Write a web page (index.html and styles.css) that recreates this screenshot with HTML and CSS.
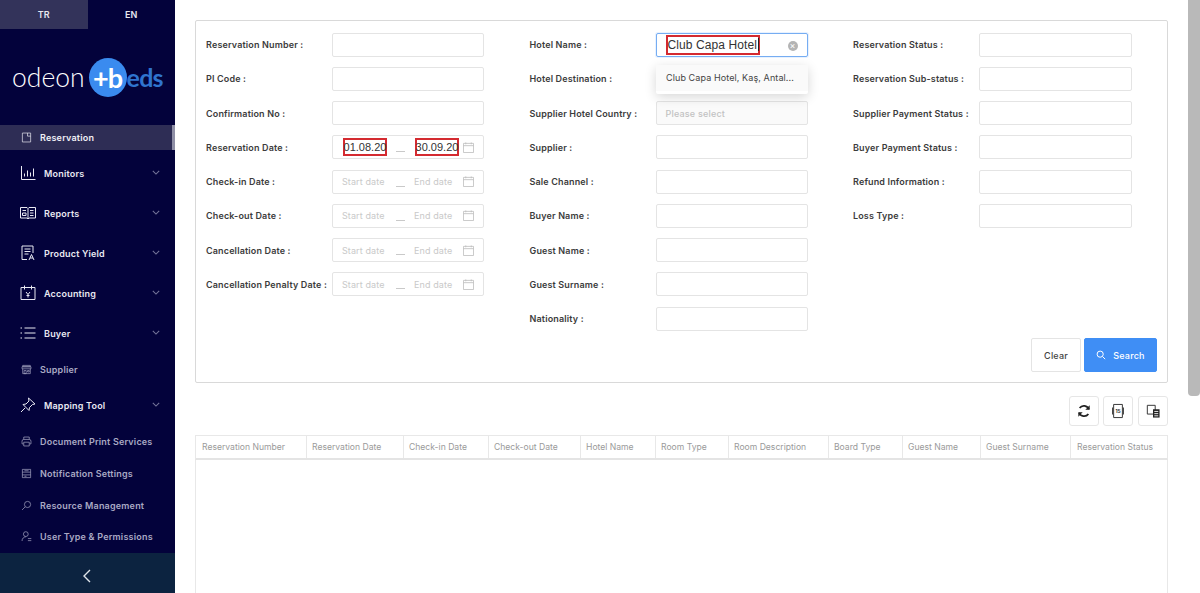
FILE: index.html
```html
<!DOCTYPE html>
<html lang="en">
<head>
<meta charset="utf-8">
<title>Reservation</title>
<link rel="stylesheet" href="styles.css">
</head>
<body>
<div class="app">
<aside class="sidebar">
  <div class="langs"><div class="lang lang-on">TR</div><div class="lang">EN</div></div>
  <div class="logo"><span class="logo-od">odeon</span><span class="logo-mark"><span class="logo-circle"></span><span class="logo-pb">+b</span></span><span class="logo-eds">eds</span></div>
  <nav class="menu">
    <a class="item small active"><svg class="ic" viewBox="0 0 16 16"><path d="M2 1.500h12v13h-12zM9.500 1.500v4.500h4.500"/></svg><span>Reservation</span></a>
    <a class="item big"><svg class="ic" viewBox="0 0 16 16"><path d="M1.500 1v13.500h14M4.500 11.500v-3M7.500 11.500v-6M10.500 11.500v-4M13.500 11.500v-8"/></svg><span>Monitors</span><svg class="chev" viewBox="0 0 10 6"><path d="M1 1l4 4 4-4"/></svg></a>
    <a class="item big"><svg class="ic" viewBox="0 0 16 16"><path d="M.5 2.500h6.500l1 1 1-1h6.500v10.500h-6.500l-1 1-1-1h-6.500zM8 3.500v10M2.500 5.500h3.500M2.500 8h3.500v2.500h-3.500zM10 5.500h3.500M10 8h3.500M10 10.500h3.500"/></svg><span>Reports</span><svg class="chev" viewBox="0 0 10 6"><path d="M1 1l4 4 4-4"/></svg></a>
    <a class="item big"><svg class="ic" viewBox="0 0 16 16"><path d="M7 14.500h-5v-13.500h11v7M4.500 4h6M4.500 6.500h6M4.500 9h4M9 15l2.500-5.500 2.500 5.500M10 13h3"/></svg><span>Product Yield</span><svg class="chev" viewBox="0 0 10 6"><path d="M1 1l4 4 4-4"/></svg></a>
    <a class="item big"><svg class="ic" viewBox="0 0 16 16"><path d="M1 2.500h14v12h-14zM4.500 .5v4M11.500 .5v4M6 7l2 2.500 2-2.500M8 9.500v3M6.500 10.500h3"/></svg><span>Accounting</span><svg class="chev" viewBox="0 0 10 6"><path d="M1 1l4 4 4-4"/></svg></a>
    <a class="item big"><svg class="ic" viewBox="0 0 16 16"><path d="M4.500 3h11M4.500 8h11M4.500 13h11M.5 3h1.500M.5 8h1.500M.5 13h1.500"/></svg><span>Buyer</span><svg class="chev" viewBox="0 0 10 6"><path d="M1 1l4 4 4-4"/></svg></a>
    <a class="item small dim"><svg class="ic" viewBox="0 0 16 16"><path d="M2.500 2h11v2h-11zM1.500 4h13v3h-13zM2.500 7v7h11v-7M4.500 9.500h3v4.500h-3zM9.500 9.500h2.500v2h-2.500z"/></svg><span>Supplier</span></a>
    <a class="item big"><svg class="ic" viewBox="0 0 16 16"><path d="M8.500 1l6.500 6-2.500.5-3 3-.5 3-6-6 3-.5 3-3zM5 11l-4 4"/></svg><span>Mapping Tool</span><svg class="chev" viewBox="0 0 10 6"><path d="M1 1l4 4 4-4"/></svg></a>
    <a class="item small dim"><svg class="ic" viewBox="0 0 16 16"><path d="M4 5v-3.500h8v3.500M3.500 11.500h-2v-4a2.500 2.500 0 0 1 2.500-2.500h8a2.500 2.500 0 0 1 2.500 2.500v4h-2M4 9h8v5.500h-8z"/></svg><span>Document Print Services</span></a>
    <a class="item small dim"><svg class="ic" viewBox="0 0 16 16"><path d="M2 2h12v12h-12zM2 6h12M5 4h6M2 10h12M5 12h3"/></svg><span>Notification Settings</span></a>
    <a class="item small dim"><svg class="ic" viewBox="0 0 16 16"><circle cx="9.500" cy="6.500" r="4.500"/><path d="M6 10l-4.500 4.500"/></svg><span>Resource Management</span></a>
    <a class="item small dim"><svg class="ic" viewBox="0 0 16 16"><circle cx="7" cy="4.500" r="3.500"/><path d="M1.500 14.500c0-3.500 2.500-6 5.500-6M10 11h5M10 14h5"/></svg><span>User Type &amp; Permissions</span></a>
  </nav>
  <div class="collapse"><svg class="back" viewBox="0 0 10 14"><path d="M8 1l-6 6 6 6"/></svg></div>
</aside>
<main class="main">
  <section class="card">
    <div class="cols">
      <div class="col">
        <div class="row"><label>Reservation Number :</label><div class="box"></div></div>
        <div class="row"><label>PI Code :</label><div class="box"></div></div>
        <div class="row"><label>Confirmation No :</label><div class="box"></div></div>
        <div class="row"><label>Reservation Date :</label><div class="box range"><span class="date">01.08.20</span><span class="to to-filled"></span><span class="date">30.09.20</span><svg class="cal" viewBox="0 0 12 12"><path d="M.5 1.500h11v10h-11zM.5 4h11M3 .5v2M9 .5v2"/></svg></div></div>
        <div class="row"><label>Check-in Date :</label><div class="box range empty"><span class="ph">Start date</span><span class="to"></span><span class="ph">End date</span><svg class="cal" viewBox="0 0 12 12"><path d="M.5 1.500h11v10h-11zM.5 4h11M3 .5v2M9 .5v2"/></svg></div></div>
        <div class="row"><label>Check-out Date :</label><div class="box range empty"><span class="ph">Start date</span><span class="to"></span><span class="ph">End date</span><svg class="cal" viewBox="0 0 12 12"><path d="M.5 1.500h11v10h-11zM.5 4h11M3 .5v2M9 .5v2"/></svg></div></div>
        <div class="row"><label>Cancellation Date :</label><div class="box range empty"><span class="ph">Start date</span><span class="to"></span><span class="ph">End date</span><svg class="cal" viewBox="0 0 12 12"><path d="M.5 1.500h11v10h-11zM.5 4h11M3 .5v2M9 .5v2"/></svg></div></div>
        <div class="row"><label>Cancellation Penalty Date :</label><div class="box range empty"><span class="ph">Start date</span><span class="to"></span><span class="ph">End date</span><svg class="cal" viewBox="0 0 12 12"><path d="M.5 1.500h11v10h-11zM.5 4h11M3 .5v2M9 .5v2"/></svg></div></div>
      </div>
      <div class="col">
        <div class="row"><label>Hotel Name :</label><div class="box focus"><span class="typed">Club Capa Hotel</span><span class="clear-x">×</span>
          <div class="drop"><div class="drop-item">Club Capa Hotel, Kaş, Antal...</div></div></div></div>
        <div class="row"><label>Hotel Destination :</label><div class="box"></div></div>
        <div class="row"><label>Supplier Hotel Country :</label><div class="box select"><span class="please">Please select</span></div></div>
        <div class="row"><label>Supplier :</label><div class="box"></div></div>
        <div class="row"><label>Sale Channel :</label><div class="box"></div></div>
        <div class="row"><label>Buyer Name :</label><div class="box"></div></div>
        <div class="row"><label>Guest Name :</label><div class="box"></div></div>
        <div class="row"><label>Guest Surname :</label><div class="box"></div></div>
        <div class="row"><label>Nationality :</label><div class="box"></div></div>
      </div>
      <div class="col col-last">
        <div class="row"><label>Reservation Status :</label><div class="box"></div></div>
        <div class="row"><label>Reservation Sub-status :</label><div class="box"></div></div>
        <div class="row"><label>Supplier Payment Status :</label><div class="box"></div></div>
        <div class="row"><label>Buyer Payment Status :</label><div class="box"></div></div>
        <div class="row"><label>Refund Information :</label><div class="box"></div></div>
        <div class="row"><label>Loss Type :</label><div class="box"></div></div>
      </div>
    </div>
    <div class="actions">
      <button class="btn">Clear</button>
      <button class="btn primary"><svg class="search" viewBox="0 0 12 12"><circle cx="5" cy="5" r="3.700"/><path d="M8 8l3 3"/></svg>Search</button>
    </div>
  </section>
  <div class="tools">
    <button class="tool"><svg viewBox="0 0 16 16"><path class="thick" d="M13.500 6a6 6 0 0 0-10.500-1.500M2.500 10a6 6 0 0 0 10.500 1.500"/><path class="fill" d="M14.500 1.500v5h-5zM1.500 14.500v-5h5z"/></svg></button>
    <button class="tool"><svg viewBox="0 0 16 16"><path class="thin" d="M3 .5h10v15h-10zM1.800 4v8M14.200 4v8"/><text class="xls" x="8" y="10.500">15</text></svg></button>
    <button class="tool"><svg viewBox="0 0 16 16"><path class="thin" d="M1.500 1.500h9v10h-9z"/><path class="fill" d="M8 6h7.500v9.500h-7.500z"/><path class="wline" d="M9.500 8.500h4.500M9.500 11h4.500M9.500 13.500h4.500"/></svg></button>
  </div>
  <section class="table">
    <div class="thead">
      <div class="th c1">Reservation Number</div>
      <div class="th c2">Reservation Date</div>
      <div class="th c3">Check-in Date</div>
      <div class="th c4">Check-out Date</div>
      <div class="th c5">Hotel Name</div>
      <div class="th c6">Room Type</div>
      <div class="th c7">Room Description</div>
      <div class="th c8">Board Type</div>
      <div class="th c9">Guest Name</div>
      <div class="th c10">Guest Surname</div>
      <div class="th c11">Reservation Status</div>
    </div>
    <div class="tbody"></div>
  </section>
</main>
</div>
<div class="scrollbar"><div class="thumb"></div></div>
</body>
</html>
```
FILE: styles.css
```css
* { box-sizing: border-box; }
html, body { margin: 0; height: 100%; overflow: hidden; background: #fff; }
body { font-family: Inter, "Liberation Sans", sans-serif; color: #333; }
.app { display: flex; height: 593px; overflow: hidden; }

.sidebar { width: 175px; flex: none; background: #03023b; display: flex; flex-direction: column; }
.langs { display: flex; height: 29px; }
.lang { flex: 1; display: flex; align-items: center; justify-content: center; color: #e8e8f0; font-size: 9px; font-weight: 600; }
.lang-on { background: #33335a; }
.logo { height: 96px; display: flex; align-items: center; padding: 0 0 0 12px; }
.logo-od { color: #fff; font-size: 26.500px; font-weight: 300; font-family: Lato, sans-serif; }
.logo-mark { position: relative; width: 38px; height: 39px; margin: 0 0 0 4px; display: flex; align-items: center; justify-content: center; }
.logo-circle { position: absolute; inset: 0; border-radius: 50%; background: #3a8bef; }
.logo-pb { position: relative; color: #fff; font-size: 27px; font-weight: 700; letter-spacing: -1px; font-family: Lato, sans-serif; }
.logo-eds { color: #2f74cf; font-size: 25px; font-weight: 700; letter-spacing: -.8px; font-family: Lato, sans-serif; }

.menu { display: flex; flex-direction: column; flex: 1; }
.item { display: flex; align-items: center; color: #e9e9f2; font-size: 9px; font-weight: 600; letter-spacing: .2px; position: relative; }
.item.big { height: 40px; padding-left: 20px; gap: 8px; }
.item.big .ic { width: 16px; height: 16px; }
.item.small { height: 32px; padding-left: 21px; gap: 8px; }
.item.small .ic { width: 11px; height: 13px; }
.item.dim { color: #a9a9c4; }
.item.dim:last-child { padding-bottom: 1px; }
.item.dim .ic { stroke: #a9a9c4; }
.item.active { height: 25px; margin-bottom: 3px; background: #2e2d55; color: #f0f0f6; }
.item.active::after { content: ""; position: absolute; right: 0; top: 0; bottom: 0; width: 3px; background: #8f8fa6; }
.ic { fill: none; stroke: #e9e9f2; stroke-width: 1; flex: none; }
.chev { position: absolute; right: 15px; top: 17px; width: 8px; height: 5px; fill: none; stroke: #75759a; stroke-width: 1.300; }
.collapse { height: 40px; background: #0c2340; display: flex; align-items: center; justify-content: center; }
.back { width: 10px; height: 14px; fill: none; stroke: #dfe4ea; stroke-width: 1.400; margin: 6px 1px 0 0; }

.main { width: 993px; height: 593px; padding: 20px 0 0 20px; flex: none; overflow: hidden; }
.card { width: 973px; height: 363px; border: 1px solid #d9d9d9; border-radius: 2px; padding: 11.500px 0 0 10px; position: relative; }
.cols { display: flex; }
.col { width: 323.500px; flex: none; display: flex; flex-direction: column; gap: 10.250px; }
.row { display: flex; align-items: center; height: 24px; }
label { width: 126px; flex: none; font-size: 9px; font-weight: 600; color: #3c3c3c; letter-spacing: .15px; white-space: nowrap; }
.box { width: 152px; height: 24px; border: 1px solid #e4e4e4; border-radius: 2px; background: #fff; position: relative; display: flex; align-items: center; }
.col-last .box { width: 153px; }
.focus { border-color: #76adf2; box-shadow: 0 0 0 1px rgba(64,150,255,.12); padding-left: 9px; }
.typed { box-shadow: inset 0 0 0 2px #d42a30; height: 20px; width: 94px; font-family: "Liberation Sans", sans-serif; font-size: 12px; letter-spacing: .1px; color: #333; line-height: 20px; padding-left: 2px; white-space: nowrap; }
.typed::after { content: ""; display: inline-block; width: 1px; height: 13px; margin-left: 1px; background: #222; vertical-align: -2px; }
.clear-x { position: absolute; right: 9px; top: 7px; width: 10px; height: 10px; border-radius: 50%; background: #b4b4b4; color: #fff; font-size: 9px; line-height: 9px; text-align: center; }
.drop { position: absolute; left: -1px; top: 31px; width: 152px; height: 29px; background: #fff; box-shadow: 0 3px 12px rgba(0,0,0,.16); border-radius: 2px; z-index: 2; }
.drop-item { height: 26px; background: #fafafa; padding: 7px 0 0 10.500px; font-size: 9px; color: #444; letter-spacing: .1px; white-space: nowrap; }
.select { background: #fafafa; padding-left: 9px; }
.please { font-size: 9px; color: #c2c2c2; font-weight: 500; letter-spacing: .2px; }
.range { padding-left: 10px; }
.range.empty { padding-left: 9px; }
.date { box-shadow: inset 0 0 0 2px #d42a30; width: 44px; height: 18px; font-family: "Liberation Sans", sans-serif; font-size: 11px; color: #333; line-height: 18px; white-space: nowrap; text-align: center; flex: none; }
.ph { width: 45px; font-size: 9px; color: #c9c9c9; white-space: nowrap; flex: none; letter-spacing: .1px; }
.to { width: 9px; height: 5px; margin: 5px 9px 0 9px; border-bottom: 1px solid #c9c9c9; flex: none; }
.to-filled { margin-right: 10px; }
.cal { width: 11px; height: 11px; margin-left: 4px; fill: none; stroke: #bdbdbd; stroke-width: .9; flex: none; }
.actions { position: absolute; right: 10px; top: 317px; display: flex; gap: 3px; }
.btn { height: 34px; width: 50px; border: 1px solid #e4e4e4; border-radius: 2px; background: #fff; font: 500 9px Inter, sans-serif; color: #444; letter-spacing: .2px; padding: 0; display: flex; align-items: center; justify-content: center; }
.primary { width: 73px; background: #3f8ef5; border-color: #3f8ef5; color: #fff; gap: 7px; }
.search { width: 10px; height: 10px; fill: none; stroke: #fff; stroke-width: 1.200; }

.tools { width: 973px; display: flex; justify-content: flex-end; margin-top: 13px; }
.tool { width: 30px; height: 30px; border: 1px solid #e6e6e6; border-radius: 3px; background: #fff; padding: 0; display: flex; align-items: center; justify-content: center; }
.tool + .tool { margin-left: 4px; }
.tool:last-child { margin-left: 5px; }
.tool svg { width: 14px; height: 14px; overflow: visible; }
.thick { fill: none; stroke: #222; stroke-width: 2; }
.thin { fill: none; stroke: #333; stroke-width: 1.100; }
.fill { fill: #222; }
.wline { stroke: #fff; stroke-width: 1; }
.xls { font: 700 5.500px Inter, sans-serif; text-anchor: middle; fill: #333; }

.table { width: 973px; margin-top: 9px; }
.thead { display: flex; height: 25px; border: 1px solid #e8e8e8; border-bottom: 2px solid #e4e4e4; }
.th { height: 100%; border-right: 1px solid #e8e8e8; padding: 0 0 1px 5px; display: flex; align-items: center; font-size: 8.600px; color: #9a9a9a; white-space: nowrap; flex: none; }
.c1 { width: 111px; padding-left: 6px; } .c2 { width: 97px; } .c3 { width: 85px; } .c4 { width: 92px; } .c5 { width: 75px; }
.c6 { width: 73px; } .c7 { width: 100px; } .c8 { width: 74px; } .c9 { width: 78px; } .c10 { width: 90px; } .c11 { width: 96px; padding-left: 6px; border-right: 0; }
.tbody { height: 133px; border: 1px solid #e8e8e8; border-width: 0 1px; }

.scrollbar { position: absolute; right: 0; top: 0; width: 12px; height: 593px; background: #fff; }
.thumb { width: 12px; height: 396px; background: #b9b9b9; border-radius: 0 0 4px 4px; }
```
